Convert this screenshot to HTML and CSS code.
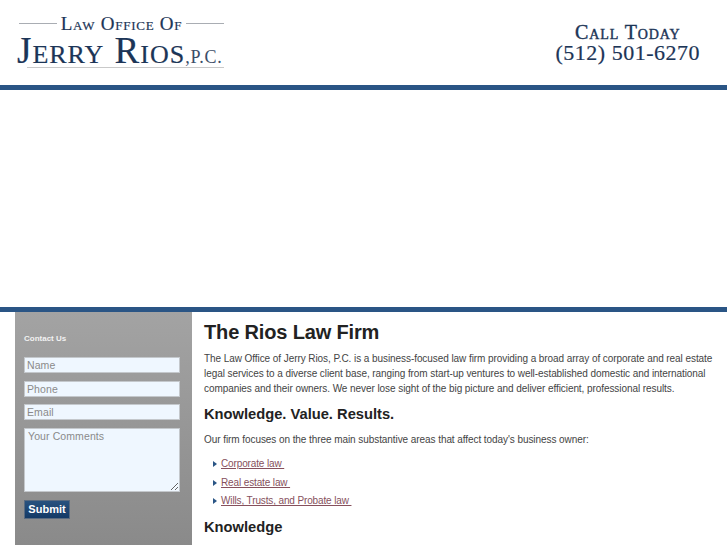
FILE: index.html
```html
<!DOCTYPE html>
<html lang="en">
<head>
<meta charset="utf-8">
<title>The Rios Law Firm</title>
<link rel="stylesheet" href="styles.css">
</head>
<body>
<header class="header">
  <div class="logo">
    <div class="logo-top"><span class="rule"></span><span class="logo-office">Law Office Of</span><span class="rule"></span></div>
    <div class="logo-name"><span class="logo-jerry">Jerry Rios</span><span class="logo-pc">,P.C.</span></div>
  </div>
  <div class="call">
    <div class="call-label">Call Today</div>
    <div class="call-number">(512) 501-6270</div>
  </div>
</header>
<div class="banner"></div>
<main class="main">
  <aside class="sidebar">
    <h3 class="form-title">Contact Us</h3>
    <form class="form">
      <input class="field" type="text" placeholder="Name">
      <input class="field" type="text" placeholder="Phone">
      <input class="field" type="text" placeholder="Email">
      <textarea class="field area" placeholder="Your Comments"></textarea>
      <button class="submit" type="button">Submit</button>
    </form>
  </aside>
  <section class="content">
    <h1 class="title">The Rios Law Firm</h1>
    <p class="para">The Law Office of Jerry Rios, P.C. is a business-focused law firm providing a broad array of corporate and real estate legal services to a diverse client base, ranging from start-up ventures to well-established domestic and international companies and their owners. We never lose sight of the big picture and deliver efficient, professional results.</p>
    <h2 class="subtitle">Knowledge. Value. Results.</h2>
    <p class="para">Our firm focuses on the three main substantive areas that affect today's business owner:</p>
    <ul class="list">
      <li class="item"><a class="link" href="#">Corporate law </a></li>
      <li class="item"><a class="link" href="#">Real estate law </a></li>
      <li class="item"><a class="link" href="#">Wills, Trusts, and Probate law </a></li>
    </ul>
    <h2 class="subtitle">Knowledge</h2>
  </section>
</main>
</body>
</html>
```
FILE: styles.css
```css
html, body {
  margin: 0;
  padding: 0;
  height: 545px;
  overflow: hidden;
  background: #fff;
  font-family: "Liberation Sans", Arial, sans-serif;
}
.header {
  height: 85px;
  display: flex;
  justify-content: space-between;
  padding: 0 27px 0 17px;
  border-bottom: 5px solid #2a5585;
  color: #1c3557;
  font-family: "Liberation Serif", "Times New Roman", serif;
}
.logo {
  width: 207px;
  padding-top: 14px;
}
.logo-top {
  display: flex;
  align-items: center;
  gap: 4px;
  height: 19px;
  padding-left: 2px;
}
.rule {
  flex: 1;
  height: 1px;
  background: #a9adb3;
}
.logo-office {
  font-size: 19px;
  font-variant: small-caps;
  letter-spacing: 0.75px;
  white-space: nowrap;
  -webkit-text-stroke: 0.2px #1c3557;
}
.logo-name {
  line-height: 31px;
  white-space: nowrap;
  height: 32px;
  margin-top: 2px;
  position: relative;
}
.logo-name::after {
  content: "";
  position: absolute;
  left: 10px;
  right: 0;
  top: 32px;
  height: 1px;
  background: #c9c9c9;
}
.logo-jerry {
  font-size: 37px;
  font-variant: small-caps;
  letter-spacing: 1px;
  -webkit-text-stroke: 0.2px #1c3557;
}
.logo-pc {
  font-size: 18px;
  color: #3b4d68;
  letter-spacing: 0.8px;
}
.call {
  padding-top: 22px;
  text-align: center;
}
.call-label {
  font-size: 20px;
  font-variant: small-caps;
  letter-spacing: 0.9px;
  line-height: 20px;
  -webkit-text-stroke: 0.4px #1c3557;
}
.call-number {
  font-size: 22px;
  letter-spacing: 0.5px;
  line-height: 22px;
  -webkit-text-stroke: 0.2px #1c3557;
}
.banner {
  height: 217px;
}
.main {
  display: flex;
  border-top: 5px solid #2a5585;
  height: 233px;
  padding-left: 15px;
}
.sidebar {
  width: 177px;
  flex: none;
  box-sizing: border-box;
  padding: 22px 12px 0 9px;
  background: linear-gradient(#a3a3a3, #8a8a8a);
}
.form-title {
  margin: 0 0 14px;
  font-size: 8px;
  line-height: 9px;
  font-weight: bold;
  color: #f2f2f2;
}
.form {
  display: flex;
  flex-direction: column;
  align-items: flex-start;
}
.field {
  box-sizing: border-box;
  width: 156px;
  height: 16px;
  margin: 0 0 7.6px;
  padding: 0 2px;
  border: 1px solid #c4c8cc;
  border-radius: 0;
  outline: 0;
  background: #eff7ff;
  font-family: "Liberation Sans", Arial, sans-serif;
  font-size: 10.5px;
  letter-spacing: 0.1px;
}
.field::placeholder {
  color: #8a8a8a;
  opacity: 1;
}
.area {
  height: 64px;
  margin-bottom: 8px;
  padding: 1px 3px;
}
.submit {
  width: 46px;
  height: 19px;
  padding: 0;
  border: 1px solid #5a6b80;
  background: linear-gradient(#28527f, #143a66);
  color: #fff;
  font-family: "Liberation Sans", Arial, sans-serif;
  font-size: 11px;
  font-weight: bold;
}
.content {
  flex: 1;
  padding: 9px 0 0 12px;
  color: #444;
  min-width: 0;
}
.title {
  margin: 0 0 7px;
  font-size: 20px;
  line-height: 23px;
  letter-spacing: -0.15px;
  color: #222;
}
.para {
  margin: 0 0 9px;
  font-size: 10px;
  line-height: 15px;
  letter-spacing: -0.07px;
}
.subtitle {
  margin: 0 0 9px;
  font-size: 14.7px;
  line-height: 18px;
  color: #222;
}
.list {
  margin: 0 0 10px;
  padding: 0 0 0 8px;
  list-style: none;
}
.item {
  position: relative;
  padding-left: 9px;
  margin-bottom: 3.5px;
  font-size: 10px;
  line-height: 15px;
}
.item::before {
  content: "";
  position: absolute;
  left: 1px;
  top: 5px;
  border-left: 4px solid #2a5585;
  border-top: 3.5px solid transparent;
  border-bottom: 3.5px solid transparent;
}
.link {
  color: #86505c;
  text-decoration: underline;
  white-space: pre;
  letter-spacing: -0.13px;
}
```
